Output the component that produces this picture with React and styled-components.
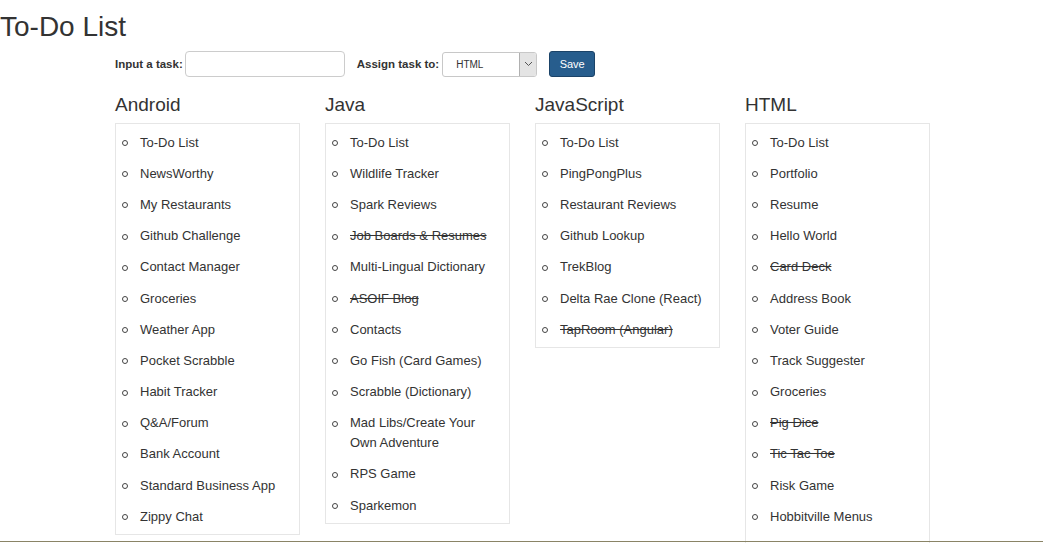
import styled, { createGlobalStyle } from "styled-components";

const GlobalStyle = createGlobalStyle`
    html, body {
        margin: 0;
        padding: 0;
        overflow: hidden;
        background: #fff;
    }
    body {
        font-family: "Liberation Sans", Arial, sans-serif;
        color: #333;
    }
`

const Page = styled.div`
    width: 1043px;
    height: 543px;
    overflow: hidden;
`

const Title = styled.h1`
    font-size: 28px;
    font-weight: 400;
    line-height: 31px;
    margin: 11px 0 0 0;
    color: #333;
`

const Form = styled.form`
    display: flex;
    align-items: center;
    margin: 9px 0 0 115px;
    height: 26px;
`

const Label = styled.label`
    font-size: 11.5px;
    font-weight: 700;
    color: #333;
    margin-right: ${p => p.$gap || 3}px;
`

const TextInput = styled.input`
    box-sizing: border-box;
    width: 160px;
    height: 26px;
    border: 1px solid #ccc;
    border-radius: 4px;
    margin-right: 12px;
    padding: 0 6px;
    font-family: inherit;
`

const Select = styled.div`
    box-sizing: border-box;
    display: flex;
    align-items: stretch;
    width: 95px;
    height: 25px;
    border: 1px solid #c8c8c8;
    border-radius: 3px;
    margin-right: 12px;
    overflow: hidden;
    background: #fff;
`

const SelectValue = styled.span`
    flex: 1;
    display: flex;
    align-items: center;
    padding-left: 13px;
    font-size: 10px;
    color: #333;
`

const SelectArrow = styled.span`
    width: 16px;
    display: flex;
    align-items: center;
    justify-content: center;
    background: #e4e4e4;
    border-left: 1px solid #b0b0b0;
`

const SaveButton = styled.button`
    box-sizing: border-box;
    width: 46px;
    height: 26px;
    background: #275d8d;
    border: 1px solid #1b4368;
    border-radius: 3px;
    color: #fff;
    font-family: inherit;
    font-size: 11px;
    padding: 0;
`

const Columns = styled.div`
    display: flex;
    align-items: flex-start;
    gap: 25px;
    margin: 17px 0 0 115px;
`

const Column = styled.div`
    width: 185px;
`

const Heading = styled.h3`
    font-size: 19px;
    font-weight: 400;
    line-height: 21px;
    margin: 0 0 8px 0;
    color: #333;
`

const List = styled.ul`
    list-style: none;
    margin: 0;
    padding: 3px 0 ${p => (p.$open ? 30 : 2)}px;
    border: 1px solid #e6e6e6;
`

const Item = styled.li`
    position: relative;
    font-size: 13px;
    line-height: 20px;
    padding: 5.6px 14px 5.6px 24px;
    color: #333;
    text-decoration: ${p => (p.$done ? "line-through" : "none")};

    &::before {
        content: "";
        position: absolute;
        left: 6px;
        top: 13.1px;
        width: 4px;
        height: 4px;
        border: 1px solid #444;
        border-radius: 50%;
    }
`

const BottomRule = styled.div`
    position: fixed;
    left: 0;
    right: 0;
    top: 541px;
    height: 1px;
    background: #8a8466;
`

const columns = [
    {
        name: "Android",
        tasks: [
            ["To-Do List"], ["NewsWorthy"], ["My Restaurants"], ["Github Challenge"],
            ["Contact Manager"], ["Groceries"], ["Weather App"], ["Pocket Scrabble"],
            ["Habit Tracker"], ["Q&A/Forum"], ["Bank Account"], ["Standard Business App"],
            ["Zippy Chat"],
        ],
    },
    {
        name: "Java",
        tasks: [
            ["To-Do List"], ["Wildlife Tracker"], ["Spark Reviews"], ["Job Boards & Resumes", true],
            ["Multi-Lingual Dictionary"], ["ASOIF Blog", true], ["Contacts"], ["Go Fish (Card Games)"],
            ["Scrabble (Dictionary)"], ["Mad Libs/Create Your Own Adventure"], ["RPS Game"], ["Sparkemon"],
        ],
    },
    {
        name: "JavaScript",
        tasks: [
            ["To-Do List"], ["PingPongPlus"], ["Restaurant Reviews"], ["Github Lookup"],
            ["TrekBlog"], ["Delta Rae Clone (React)"], ["TapRoom (Angular)", true],
        ],
    },
    {
        name: "HTML",
        open: true,
        tasks: [
            ["To-Do List"], ["Portfolio"], ["Resume"], ["Hello World"], ["Card Deck", true],
            ["Address Book"], ["Voter Guide"], ["Track Suggester"], ["Groceries"],
            ["Pig Dice", true], ["Tic Tac Toe", true], ["Risk Game"], ["Hobbitville Menus"],
        ],
    },
]

export default function App() {
    return (
        <Page>
            <GlobalStyle />
            <Title>To-Do List</Title>
            <Form onSubmit={e => e.preventDefault()}>
                <Label $gap={2}>Input a task:</Label>
                <TextInput type="text" />
                <Label>Assign task to:</Label>
                <Select>
                    <SelectValue>HTML</SelectValue>
                    <SelectArrow>
                        <svg width="9" height="6" viewBox="0 0 9 6">
                            <path d="M1 1 L4.5 4.5 L8 1" fill="none" stroke="#555" strokeWidth="1" />
                        </svg>
                    </SelectArrow>
                </Select>
                <SaveButton type="submit">Save</SaveButton>
            </Form>
            <Columns>
                {columns.map(col => (
                    <Column key={col.name}>
                        <Heading>{col.name}</Heading>
                        <List $open={col.open}>
                            {col.tasks.map(([t, done]) => (
                                <Item key={t} $done={done}>{t}</Item>
                            ))}
                        </List>
                    </Column>
                ))}
            </Columns>
            <BottomRule />
        </Page>
    )
}
